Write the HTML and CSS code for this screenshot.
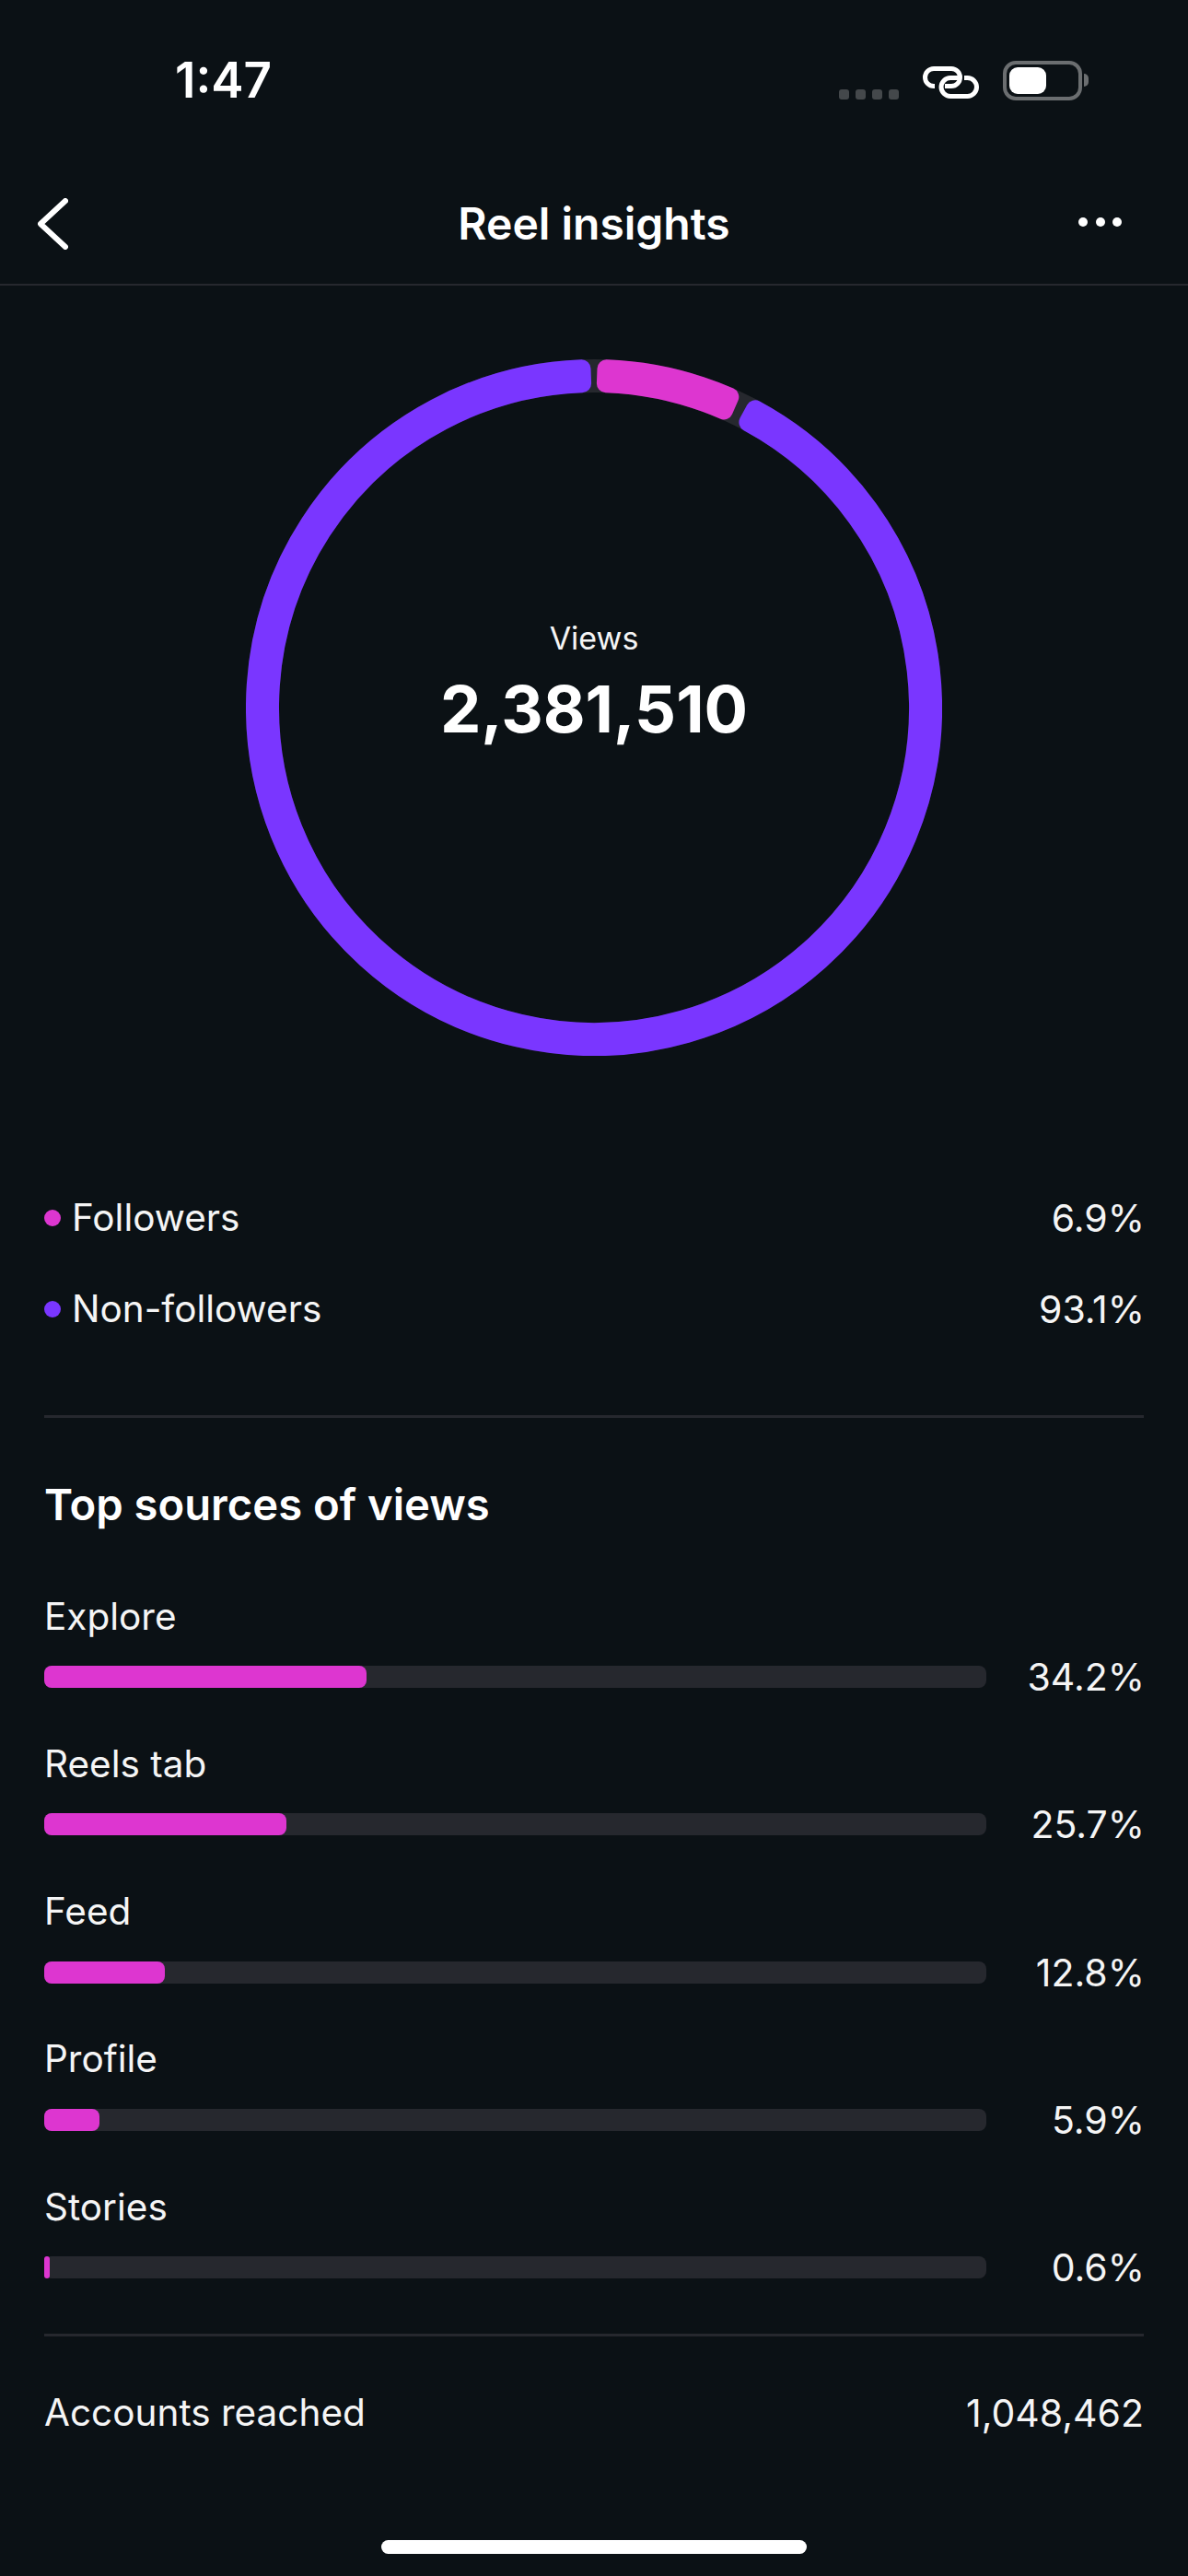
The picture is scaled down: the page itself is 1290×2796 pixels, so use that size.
FILE: index.html
```html
<!DOCTYPE html>
<html lang="en">
<head>
  <meta charset="UTF-8">
  <title>Reel insights</title>
  <link rel="stylesheet" href="styles.css">
</head>
<body>

  <div class="status-bar">
    <span class="time">1:47</span>
    <div class="status-icons">
      <div class="signal">
        <span></span><span></span><span></span><span></span>
      </div>
      <svg class="link-icon" width="61" height="35" viewBox="0 0 61 35" fill="none" stroke="#fff" stroke-width="5">
        <path d="M13 21.5H12A9.5 9.5 0 0 1 12 2.5H31A9.5 9.5 0 0 1 31 21.5H24"/>
        <path d="M38 12.5H30A10 10 0 0 0 30 32.5H48.5A10 10 0 0 0 48.5 12.5H45"/>
      </svg>
      <div class="battery"><div class="battery-level"></div></div>
      <div class="battery-nub"></div>
    </div>
  </div>

  <header class="top-nav">
    <svg class="back-icon" width="33" height="56" viewBox="0 0 33 56" fill="none" stroke="#fff" stroke-width="6" stroke-linecap="round" stroke-linejoin="round">
      <path d="M30 3L3 28L30 53"/>
    </svg>
    <h1>Reel insights</h1>
    <div class="more-icon">
      <span></span><span></span><span></span>
    </div>
  </header>

  <section class="ring-section">
    <div class="ring">
      <svg class="ring-chart" width="756" height="756" viewBox="-378 -378 756 756">
        <circle class="ring-track" r="360"/>
        <path class="ring-slice purple" d="M175.03 -323.71A368 368 0 1 1 -13.48 -367.75L-12.90 -351.76A352 352 0 1 0 167.42 -309.64Z"/>
        <path class="ring-slice magenta" d="M13.48 -367.75A368 368 0 0 1 147.33 -337.22L140.92 -322.56A352 352 0 0 0 12.90 -351.76Z"/>
      </svg>
      <div class="ring-label">
        <div class="ring-title">Views</div>
        <div class="ring-value">2,381,510</div>
      </div>
    </div>
  </section>

  <section class="legend">
    <div class="legend-row">
      <span class="legend-name"><i class="dot dot-magenta"></i>Followers</span>
      <span class="percent">6.9%</span>
    </div>
    <div class="legend-row">
      <span class="legend-name"><i class="dot dot-purple"></i>Non-followers</span>
      <span class="percent">93.1%</span>
    </div>
  </section>

  <div class="divider divider-top"></div>

  <h2>Top sources of views</h2>

  <section class="sources">
    <div class="source">
      <div class="source-name">Explore</div>
      <div class="source-row">
        <div class="bar"><div class="bar-fill" style="width: 34.2%"></div></div>
        <span class="percent">34.2%</span>
      </div>
    </div>
    <div class="source">
      <div class="source-name">Reels tab</div>
      <div class="source-row">
        <div class="bar"><div class="bar-fill" style="width: 25.7%"></div></div>
        <span class="percent">25.7%</span>
      </div>
    </div>
    <div class="source">
      <div class="source-name">Feed</div>
      <div class="source-row">
        <div class="bar"><div class="bar-fill" style="width: 12.8%"></div></div>
        <span class="percent">12.8%</span>
      </div>
    </div>
    <div class="source">
      <div class="source-name">Profile</div>
      <div class="source-row">
        <div class="bar"><div class="bar-fill" style="width: 5.9%"></div></div>
        <span class="percent">5.9%</span>
      </div>
    </div>
    <div class="source">
      <div class="source-name">Stories</div>
      <div class="source-row">
        <div class="bar"><div class="bar-fill" style="width: 0.6%"></div></div>
        <span class="percent">0.6%</span>
      </div>
    </div>
  </section>

  <div class="divider divider-bottom"></div>

  <div class="reached">
    <span class="reached-name">Accounts reached</span>
    <span>1,048,462</span>
  </div>

  <div class="home-indicator"></div>

</body>
</html>
```

FILE: styles.css
```css
* {
  box-sizing: border-box;
}

body {
  font-family: Inter, "Noto Sans", sans-serif;
  font-size: 41px;
  background: #0b1115;
  color: #f5f5f5;
  margin: 0;
  height: 2796px;
  overflow: hidden;
}

/* status bar */
.status-bar {
  display: flex;
  justify-content: space-between;
  align-items: center;
  height: 174px;
  padding: 0 108px 0 190px;
}

.time {
  font-size: 53px;
  font-weight: 600;
  color: #fff;
}

.status-icons {
  display: flex;
  align-items: flex-end;
}

.signal {
  display: flex;
  gap: 7px;
  margin-right: 26px;
  margin-bottom: 1px;
}

.signal span {
  width: 11px;
  height: 11px;
  border-radius: 3px;
  background: #44484b;
}

.link-icon {
  margin-right: 26px;
  margin-bottom: 2px;
}

.battery {
  width: 86px;
  height: 43px;
  padding: 3px;
  border: 4px solid #6b6e70;
  border-radius: 14px;
}

.battery-level {
  width: 40px;
  height: 29px;
  border-radius: 9px;
  background: #fff;
}

.battery-nub {
  align-self: center;
  width: 5px;
  height: 14px;
  margin-left: 2px;
  border-radius: 0 5px 5px 0;
  background: #6b6e70;
}

/* header */
.top-nav {
  display: grid;
  grid-template-columns: 1fr auto 1fr;
  align-items: center;
  height: 136px;
  padding: 0 41px;
  border-bottom: 2px solid #26282e;
}

.top-nav h1 {
  margin: 2px 0 0;
  font-size: 48px;
  font-weight: 600;
  color: #fff;
}

.back-icon {
  margin-top: 4px;
}

.more-icon {
  display: flex;
  justify-content: flex-end;
  gap: 8.5px;
  margin-right: 31px;
}

.more-icon span {
  width: 10px;
  height: 10px;
  border-radius: 50%;
  background: #fff;
}

/* ring */
.ring-section {
  display: flex;
  justify-content: center;
  padding-top: 80px;
}

.ring {
  display: grid;
  place-items: center;
}

.ring-chart,
.ring-label {
  grid-area: 1 / 1;
}

.ring-track {
  fill: none;
  stroke: #26282e;
  stroke-width: 36;
}

.ring-slice {
  stroke-width: 20;
  stroke-linejoin: round;
}

.purple {
  fill: #7a36ff;
  stroke: #7a36ff;
}

.magenta {
  fill: #dd36d0;
  stroke: #dd36d0;
}

.ring-label {
  padding-bottom: 52px;
  text-align: center;
}

.ring-title {
  font-size: 34px;
}

.ring-value {
  margin-top: 14px;
  font-size: 70.5px;
  font-weight: 700;
  color: #fff;
}

/* legend */
.legend {
  margin: 126px 48px 0;
}

.legend-row {
  display: flex;
  justify-content: space-between;
  align-items: center;
  height: 99px;
}

.legend-name {
  display: flex;
  align-items: center;
  font-size: 40.5px;
}

.dot {
  width: 18px;
  height: 18px;
  margin-right: 12px;
  border-radius: 50%;
}

.dot-magenta {
  background: #dd36d0;
}

.dot-purple {
  background: #7a36ff;
}

.percent {
  margin-right: -1px;
}

.divider {
  height: 3px;
  margin: 0 48px;
  background: #26282e;
}

.divider-top {
  margin-top: 66px;
}

.divider-bottom {
  margin-top: 47px;
}

/* top sources */
h2 {
  margin: 66px 48px 0;
  font-size: 47.2px;
  line-height: 56px;
  font-weight: 600;
  color: #fff;
}

.sources {
  display: flex;
  flex-direction: column;
  gap: 44.75px;
  margin: 68.5px 48px 0;
}

.source-name {
  font-size: 40.5px;
  line-height: 50px;
}

.source-row {
  display: flex;
  justify-content: space-between;
  align-items: center;
  height: 50px;
  margin-top: 15.5px;
}

.bar {
  width: 1023px;
  height: 24px;
  border-radius: 8px;
  background: #26282e;
}

.bar-fill {
  height: 100%;
  border-radius: 8px;
  background: #dd36d0;
}

/* footer row */
.reached {
  display: flex;
  justify-content: space-between;
  margin: 58px 48px 0;
  line-height: 50px;
}

.reached-name {
  font-size: 40.5px;
}

.home-indicator {
  width: 462px;
  height: 15px;
  margin: 113px auto 0;
  border-radius: 8px;
  background: #fff;
}
```
